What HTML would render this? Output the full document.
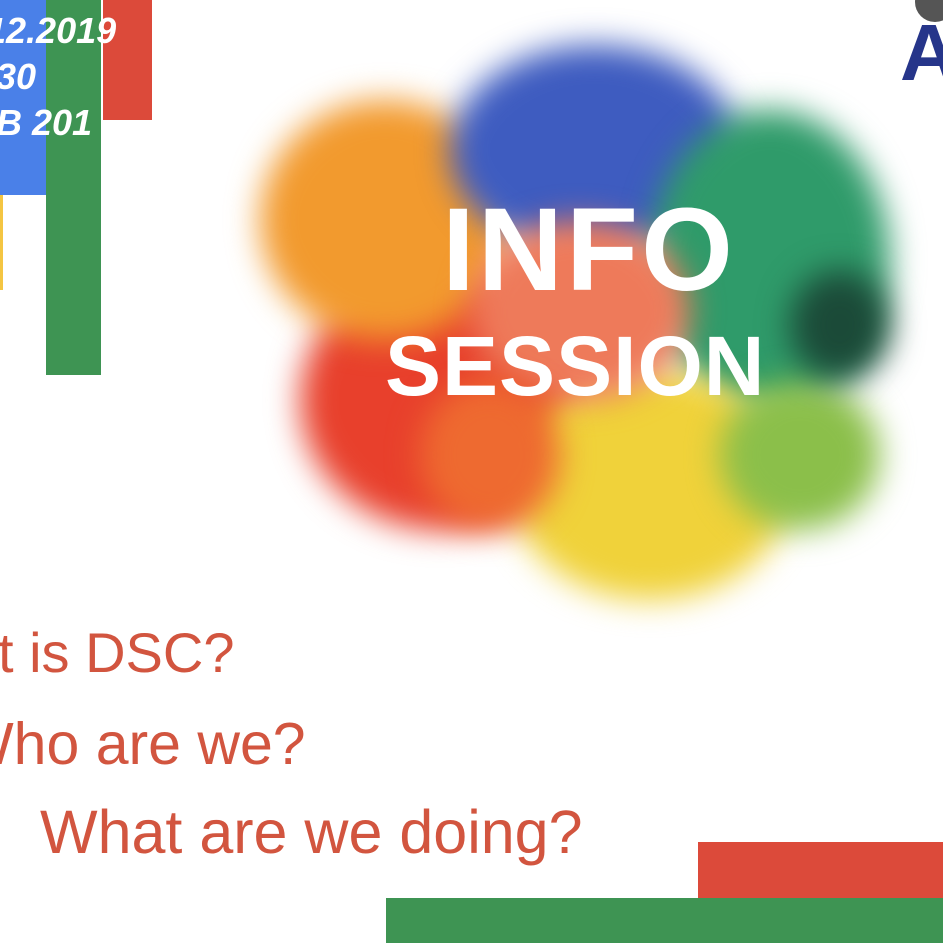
<!DOCTYPE html><html><head><style>
html,body{margin:0;width:943px;height:943px;overflow:hidden;background:#fff}
#w{position:relative;width:943px;height:943px;overflow:hidden;font-family:"Liberation Sans",sans-serif}
.a{position:absolute}
.blob{position:absolute;border-radius:50%;filter:blur(16px)}
.q{position:absolute;color:#d2553f;white-space:nowrap;font-weight:300}
</style></head><body><div id="w">
<div class="a" style="left:0;top:195px;width:3px;height:95px;background:#f4c542"></div>
<div class="a" style="left:0;top:0;width:50px;height:195px;background:#4a80e8"></div>
<div class="a" style="left:46px;top:0;width:55px;height:375px;background:#3e9453"></div>
<div class="a" style="left:103px;top:0;width:49px;height:120px;background:#dc4a3a"></div>
<div class="a" style="left:-14px;top:8px;color:#fff;font-weight:bold;font-style:italic;font-size:36px;line-height:46px">12.2019<br>&nbsp;30<br>&nbsp;B 201</div>
<div class="a" style="left:900px;top:18px;color:#26358a;font-weight:bold;font-size:80px;line-height:70px">A</div>
<div class="a" style="left:915px;top:-18px;width:40px;height:40px;border-radius:50%;background:#555"></div>

<div class="blob" style="left:300px;top:270px;width:280px;height:260px;background:#e8402c"></div>
<div class="blob" style="left:260px;top:100px;width:250px;height:240px;background:#f29a2e"></div>
<div class="blob" style="left:450px;top:45px;width:290px;height:210px;background:#3e5cc0"></div>
<div class="blob" style="left:650px;top:110px;width:240px;height:300px;background:#2f9b6a"></div>
<div class="blob" style="left:510px;top:370px;width:280px;height:230px;background:#f0d23a"></div>
<div class="blob" style="left:720px;top:380px;width:160px;height:150px;background:#8bbf4a"></div>
<div class="blob" style="left:470px;top:220px;width:220px;height:180px;background:#ee7a5a"></div>
<div class="blob" style="left:790px;top:270px;width:100px;height:110px;background:#1b4a38"></div>
<div class="blob" style="left:420px;top:380px;width:140px;height:150px;background:#ee6a30"></div>

<div class="a" style="left:442px;top:190px;color:#fff;font-weight:bold;font-size:118px;line-height:120px;letter-spacing:3px">INFO</div>
<div class="a" style="left:385px;top:323px;color:#fff;font-weight:bold;font-size:84px;line-height:86px;letter-spacing:1px">SESSION</div>

<div class="q" style="left:-2px;top:620px;font-size:56px">t is DSC?</div>
<div class="q" style="left:-42px;top:710px;font-size:59px">Who are we?</div>
<div class="q" style="left:40px;top:797px;font-size:61px">What are we doing?</div>

<div class="a" style="left:698px;top:842px;width:245px;height:56px;background:#dc4a3a"></div>
<div class="a" style="left:386px;top:898px;width:557px;height:45px;background:#3e9453"></div>
</div></body></html>
